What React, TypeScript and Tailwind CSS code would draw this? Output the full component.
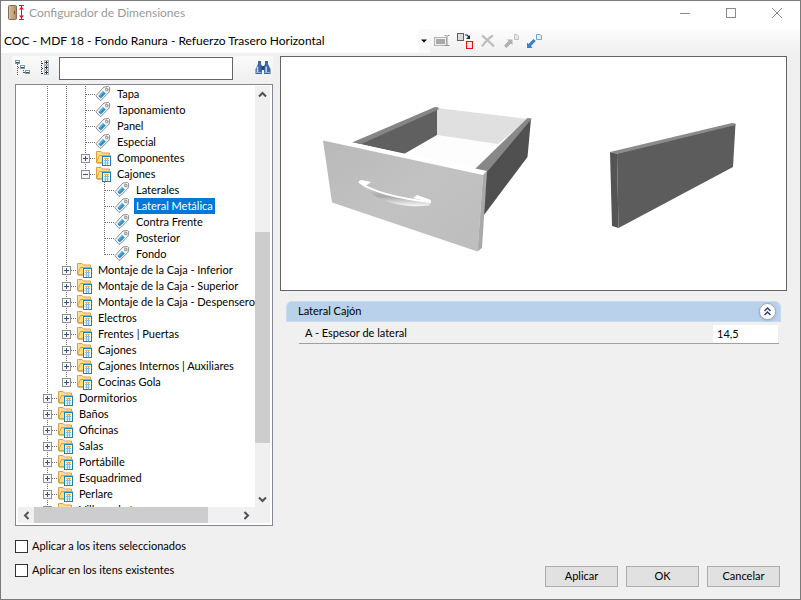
import { useState } from 'react'
import { clsx } from 'clsx'

type Cell = 'line' | 'blank' | 'tee' | 'end' | 'plus' | 'plusEnd' | 'minusEnd'

interface TreeRow {
  name: string
  cells: Cell[]
  leaf?: boolean
}

const rows: TreeRow[] = [
  { name: 'Tapa', cells: ['line', 'line', 'tee'], leaf: true },
  { name: 'Taponamiento', cells: ['line', 'line', 'tee'], leaf: true },
  { name: 'Panel', cells: ['line', 'line', 'tee'], leaf: true },
  { name: 'Especial', cells: ['line', 'line', 'tee'], leaf: true },
  { name: 'Componentes', cells: ['line', 'line', 'plus'] },
  { name: 'Cajones', cells: ['line', 'line', 'minusEnd'] },
  { name: 'Laterales', cells: ['line', 'line', 'blank', 'tee'], leaf: true },
  { name: 'Lateral Metálica', cells: ['line', 'line', 'blank', 'tee'], leaf: true },
  { name: 'Contra Frente', cells: ['line', 'line', 'blank', 'tee'], leaf: true },
  { name: 'Posterior', cells: ['line', 'line', 'blank', 'tee'], leaf: true },
  { name: 'Fondo', cells: ['line', 'line', 'blank', 'end'], leaf: true },
  { name: 'Montaje de la Caja - Inferior', cells: ['line', 'plus'] },
  { name: 'Montaje de la Caja - Superior', cells: ['line', 'plus'] },
  { name: 'Montaje de la Caja - Despensero', cells: ['line', 'plus'] },
  { name: 'Electros', cells: ['line', 'plus'] },
  { name: 'Frentes | Puertas', cells: ['line', 'plus'] },
  { name: 'Cajones', cells: ['line', 'plus'] },
  { name: 'Cajones Internos | Auxiliares', cells: ['line', 'plus'] },
  { name: 'Cocinas Gola', cells: ['line', 'plusEnd'] },
  { name: 'Dormitorios', cells: ['plus'] },
  { name: 'Baños', cells: ['plus'] },
  { name: 'Oficinas', cells: ['plus'] },
  { name: 'Salas', cells: ['plus'] },
  { name: 'Portábille', cells: ['plus'] },
  { name: 'Esquadrimed', cells: ['plus'] },
  { name: 'Perlare', cells: ['plus'] },
  { name: 'Villamarket', cells: ['plus'] },
]

function Guide({ cell }: { cell: Cell }) {
  const vertical = cell !== 'blank'
  const short = cell === 'end' || cell === 'plusEnd' || cell === 'minusEnd'
  const horizontal = cell !== 'blank' && cell !== 'line'
  const box = cell === 'plus' || cell === 'plusEnd' || cell === 'minusEnd'
  return (
    <svg width="19" height="16" viewBox="0 0 19 16" className="shrink-0" shapeRendering="crispEdges">
      {vertical && <path d={short ? 'M9.5 0V9' : 'M9.5 0V16'} stroke="#6e6e6e" strokeDasharray="1 1" />}
      {horizontal && <path d="M10 8.5H19" stroke="#6e6e6e" strokeDasharray="1 1" />}
      {box && (
        <>
          <rect x="5.5" y="4.5" width="8" height="8" fill="#f6f6f6" stroke="#8f8f8f" />
          <path d="M7 8.5H12" stroke="#3b4f94" />
          {cell !== 'minusEnd' && <path d="M9.5 6V11" stroke="#3b4f94" />}
        </>
      )}
    </svg>
  )
}

function FolderIcon() {
  return (
    <svg width="18" height="16" viewBox="0 0 18 16" className="shrink-0">
      <path d="M1.5 12.5V1.5H6L7.5 3H14.5V12.5Z" fill="#fbe08f" stroke="#d9a045" />
      <path d="M1.500 12.500L4.500 5.500H15.500V12.500Z" fill="#fddf80" stroke="#d9a045" />
      <path d="M2 13.500H7" stroke="#c9c0b0" />
      <rect x="7.500" y="6.500" width="8" height="9" fill="#fff" stroke="#1d7fb8" />
      <path d="M9 8.500H14" stroke="#f0b050" />
      <path d="M9 10.500H14M9 13H14M10.500 9V15M12.500 9V15" stroke="#86b9e2" />
    </svg>
  )
}

function TagIcon() {
  return (
    <svg width="18" height="16" viewBox="0 0 18 16" className="shrink-0">
      <path d="M0.800 9.800L9 1L13.500 0.500L14.800 1.800L14.200 6L6 14.300L5 14.300Z" fill="#f7f7f7" stroke="#8e8e8e" />
      <path d="M3.300 10L8 5L10.800 7.400L5.800 12.400Z" fill="#2b8fd0" />
      <path d="M4.800 9.800L8.300 6" stroke="#7cc8f0" />
      <circle cx="11.800" cy="3.500" r="1.300" fill="#ddd" stroke="#888" />
    </svg>
  )
}

function Chevron({ d }: { d: string }) {
  return (
    <svg width="9" height="9" viewBox="0 0 9 9" fill="none" stroke="#505050" strokeWidth="2">
      <path d={d} />
    </svg>
  )
}

function Tree() {
  const [selected, setSelected] = useState(7)
  return (
    <div className="ml-[3px] mt-1 flex min-h-0 flex-1 flex-col border border-[#828790] bg-white px-0.5 pb-0.5 pt-px">
      <div className="flex min-h-0 flex-1">
        <ul className="min-w-0 flex-1 overflow-hidden pl-5">
          {rows.map((row, i) => (
            <li key={i} className="flex h-4 items-center">
              {row.cells.map((cell, c) => (
                <Guide key={c} cell={cell} />
              ))}
              {row.leaf ? <TagIcon /> : <FolderIcon />}
              <button
                onClick={() => setSelected(i)}
                className={clsx(
                  'ml-0.5 h-4 whitespace-nowrap px-0.5 leading-4',
                  selected === i && 'bg-[#0078d7] text-white'
                )}
              >
                {row.name}
              </button>
            </li>
          ))}
        </ul>
        <div className="flex w-[15px] flex-col bg-[#f0f0f0]">
          <button aria-label="Subir" className="flex h-4 items-center justify-center">
            <Chevron d="M1 6.500L4.500 3L8 6.500" />
          </button>
          <div className="flex flex-1 flex-col">
            <div className="grow-[130]" />
            <div className="grow-[210] bg-[#cdcdcd]" />
            <div className="grow-[48]" />
          </div>
          <button aria-label="Bajar" className="flex h-4 items-center justify-center">
            <Chevron d="M1 2.500L4.500 6L8 2.500" />
          </button>
        </div>
      </div>
      <div className="flex h-4 bg-[#f0f0f0] pr-4">
        <button aria-label="Izquierda" className="flex w-4 items-center justify-center">
          <Chevron d="M6.500 1L3 4.500L6.500 8" />
        </button>
        <div className="flex flex-1">
          <div className="grow-[175] bg-[#cdcdcd]" />
          <div className="grow-[30]" />
        </div>
        <button aria-label="Derecha" className="flex w-4 items-center justify-center">
          <Chevron d="M2.500 1L6 4.500L2.500 8" />
        </button>
      </div>
    </div>
  )
}

function TitleBar() {
  return (
    <header className="flex h-7 shrink-0 items-center bg-white pl-1.5 pr-[17px]">
      <svg width="18" height="18" viewBox="0 0 18 18" className="-mt-1 mr-1">
        <defs>
          <linearGradient id="door" x1="0" x2="1">
            <stop offset="0" stopColor="#ddc3a0" />
            <stop offset="1" stopColor="#b08a5e" />
          </linearGradient>
        </defs>
        <rect x="1.500" y="1.500" width="8" height="14" rx="1" fill="url(#door)" stroke="#8a6f50" />
        <path d="M7.500 7V10" stroke="#6e5233" />
        <path d="M12 1.500H17M12 15.500H17M14.500 2V15" stroke="#e0102a" />
        <path d="M12 5.500L14.500 2.500L17 5.500ZM12 11.500L14.500 14.500L17 11.500Z" fill="#e0102a" />
      </svg>
      <h1 className="-mt-1 flex-1 text-[12px] text-[#999]">Configurador de Dimensiones</h1>
      <div className="-mt-1 flex gap-[34px] text-[#8a8a8a]">
        <button aria-label="Minimizar">
          <svg width="12" height="12" viewBox="0 0 12 12" stroke="currentColor">
            <path d="M1 6.500H11" />
          </svg>
        </button>
        <button aria-label="Maximizar">
          <svg width="12" height="12" viewBox="0 0 12 12" fill="none" stroke="currentColor">
            <rect x="1.500" y="1.500" width="9" height="9" />
          </svg>
        </button>
        <button aria-label="Cerrar">
          <svg width="12" height="12" viewBox="0 0 12 12" stroke="currentColor">
            <path d="M1 1L11 11M11 1L1 11" />
          </svg>
        </button>
      </div>
    </header>
  )
}

function Toolbar() {
  return (
    <div className="flex h-6 shrink-0 items-center bg-linear-to-b from-[#fcfcfc] to-[#f0f0f0]">
      <div className="relative h-full w-[429px]">
        <select
          aria-label="Configuración"
          className="h-full w-full appearance-none bg-white pl-[3px] text-[12px] text-black"
        >
          <option>COC - MDF 18 - Fondo Ranura - Refuerzo Trasero Horizontal</option>
        </select>
        <div className="pointer-events-none absolute inset-y-0 right-0 flex w-3 items-center justify-center bg-[#fafafa]">
          <svg width="6" height="4" viewBox="0 0 6 4">
            <path d="M0 0.500H6L3 3.500Z" fill="#000" />
          </svg>
        </div>
      </div>
      <div className="ml-1 flex gap-[7px]">
        <button aria-label="Renombrar">
          <svg width="16" height="16" viewBox="0 0 16 16" fill="none">
            <rect x="0.500" y="4.500" width="12" height="8" fill="#eee" stroke="#b5b5b5" />
            <rect x="2" y="6" width="9" height="5" fill="#a8a8a8" />
            <path d="M10.500 2.500H12.500M13.500 2.500H15.500M13 3V12M10.500 12.500H15.500" stroke="#949494" />
          </svg>
        </button>
        <button aria-label="Reemplazar">
          <svg width="16" height="16" viewBox="0 0 16 16" fill="none">
            <rect x="0.500" y="0.500" width="6" height="7" fill="#dcdcdc" stroke="#6a5a60" />
            <rect x="9.500" y="8.500" width="6" height="7" fill="#f2e4e4" stroke="#e81010" />
            <path d="M8 2H10L12 4" stroke="#14286e" strokeWidth="1.200" />
            <path d="M13 2V6H9Z" fill="#14286e" />
          </svg>
        </button>
        <button aria-label="Eliminar">
          <svg width="16" height="16" viewBox="0 0 16 16" fill="none" stroke="#bdbdbd" strokeWidth="2.200">
            <path d="M2 2.500C5 5 10 9 14 13.500M13 2.500C9 5 5 9 2 13.500" />
          </svg>
        </button>
        <button aria-label="Exportar">
          <svg width="16" height="16" viewBox="0 0 16 16">
            <path d="M1 12.500L5.500 8L4 6.500H9.500V12L8 10.500L3.500 15Z" fill="#b0b0b0" />
            <path d="M11.500 1.500H14L15.500 3V6.500H11.500Z" fill="#e8e8e8" stroke="#c0c0c0" />
          </svg>
        </button>
        <button aria-label="Importar">
          <svg width="16" height="16" viewBox="0 0 16 16">
            <path d="M1 15V9.500L2.500 11L7.500 6L9.800 8L5 13L6.500 15Z" fill="#3d7dca" />
            <path d="M10.500 1.500H14L15.500 3V6.500H10.500Z" fill="#e6f0fb" stroke="#6fa3e0" />
          </svg>
        </button>
      </div>
    </div>
  )
}

function SearchBar() {
  return (
    <div className="flex h-6 shrink-0 items-center bg-linear-to-b from-[#fafafa] to-[#f0f0f0] pl-[3px] pr-0.5">
      <button aria-label="Contraer todo">
        <svg width="16" height="16" viewBox="0 0 16 16" fill="none" shapeRendering="crispEdges">
          <path d="M2.500 0V16M3 7.500H6M8.500 10V13M9 12.500H11" stroke="#555" strokeDasharray="1 1" />
          <rect x="0.500" y="0.500" width="4" height="3" fill="#fff" stroke="#8299a8" />
          <rect x="5.500" y="5.500" width="4" height="3" fill="#fff" stroke="#8299a8" />
          <rect x="10.500" y="10.500" width="4" height="3" fill="#fff" stroke="#8299a8" />
          <path d="M1 2H4M6 7H9M11 12H14" stroke="#33566c" />
        </svg>
      </button>
      <button aria-label="Expandir todo" className="ml-2">
        <svg width="16" height="16" viewBox="0 0 16 16" fill="none" shapeRendering="crispEdges">
          <path d="M2.500 1V15M3 3.500H6M3 8.500H6M3 13.500H6" stroke="#333" strokeDasharray="1 1" />
          <g fill="#fff" stroke="#a5b1ba">
            <rect x="5.500" y="0.500" width="4" height="4" />
            <rect x="5.500" y="5.500" width="4" height="4" />
            <rect x="5.500" y="10.500" width="4" height="4" />
          </g>
          <path d="M6 2.500H9M7.500 1V4M6 7.500H9M7.500 6V9M6 12.500H9M7.500 11V14" stroke="#333" />
        </svg>
      </button>
      <input aria-label="Buscar" className="ml-1 h-[23px] min-w-0 flex-1 border border-[#646464] bg-white px-1 outline-none" />
      <button aria-label="Buscar elemento" className="ml-[22px]">
        <svg width="16" height="16" viewBox="0 0 16 16">
          <path d="M3 1H6V4L7 6V14H0.500V9L3 4Z" fill="#3f66a8" />
          <path d="M10 1H13V4L15.500 9V14H9V6L10 4Z" fill="#3f66a8" />
          <path d="M6.500 6H9.500V10H6.500Z" fill="#24427c" />
          <path d="M2.500 6.500V12M11.200 6.500V12" stroke="#c3d8f2" strokeWidth="1.500" />
          <path d="M1 12.500H6.500M9.500 12.500H15" stroke="#8fb1de" />
        </svg>
      </button>
    </div>
  )
}

function Preview() {
  return (
    <div className="h-[235px] shrink-0 border border-[#646464] bg-white">
      <svg viewBox="281 57 505 233" className="h-full w-full">
        <defs>
          <linearGradient id="front" x1="0" y1="0" x2="1" y2="1">
            <stop offset="0" stopColor="#b9b9b9" />
            <stop offset="0.500" stopColor="#c2c2c2" />
            <stop offset="1" stopColor="#bdbdbd" />
          </linearGradient>
          <linearGradient id="grip" x1="0" y1="0" x2="0" y2="1">
            <stop offset="0" stopColor="#e8e8e8" />
            <stop offset="0.600" stopColor="#a8a8a8" />
            <stop offset="1" stopColor="#f8f8f8" />
          </linearGradient>
        </defs>
        {/* drawer box */}
        <path d="M437 134L500 144L478 170L404 154Z" fill="#fdfdfd" />
        <path d="M437 108L528 119L498 144L437 135Z" fill="#e0e0e0" />
        <path d="M356 143L437 108V135L404 154Z" fill="#606060" />
        <path d="M352 142.500L435 107L438.500 107.500V109.500L361 144Z" fill="#858585" />
        <path d="M484 169L531 119L527.500 157L484 215Z" fill="#505050" />
        <path d="M475 169L527.500 118L532 118.500L487 172Z" fill="#888" />
        {/* drawer front */}
        <path d="M323 140L352 142.500L487 171L483 176Z" fill="#fff" />
        <path d="M323 140.500L483 175L477.500 251.500L332 202.500Z" fill="url(#front)" />
        <path d="M483 175L487 171L482 248L477.500 251.500Z" fill="#a9a9a9" />
        {/* handle */}
        <path d="M359 182C374 193 403 199 431.500 202L429 205.500C408 208 378 205 359 182Z" fill="url(#grip)" />
        <path d="M359 182C374 193 403 199 431 202" fill="none" stroke="#fff" strokeWidth="2" />
        <path d="M358.500 181L362 180L371 182L367 185L364 186ZM413 198L417 195L431 200L430 202Z" fill="#fff" />
        {/* side panel */}
        <path d="M617 153.500L735.500 124L733 167L618.500 228Z" fill="#5c5c5c" />
        <path d="M610 152L617 153.500L618.500 228L612 226Z" fill="#545454" />
        <path d="M610 152L732 123L735.500 123.500V125L617 154Z" fill="#8b8b8b" />
      </svg>
    </div>
  )
}

export default function App() {
  const [thickness, setThickness] = useState('14,5')
  const [open, setOpen] = useState(true)

  return (
    <div className="flex h-screen min-h-[500px] flex-col border border-[#7a7a7a] bg-[#f0f0f0] font-['Lato',sans-serif] text-[11px] text-black">
      <TitleBar />
      <Toolbar />
      <main className="flex min-h-0 flex-1 pt-[3px]">
        <section className="ml-[11px] flex w-[263px] flex-col pr-[2px]">
          <SearchBar />
          <Tree />
          <div className="ml-[3px] flex flex-col gap-2 pb-[21px] pt-3">
            <label className="flex h-4 items-center gap-1">
              <input type="checkbox" className="size-[13px] appearance-none border border-[#333] bg-white checked:bg-[#0078d7]" />
              Aplicar a los itens seleccionados
            </label>
            <label className="flex h-4 items-center gap-1">
              <input type="checkbox" className="size-[13px] appearance-none border border-[#333] bg-white checked:bg-[#0078d7]" />
              Aplicar en los itens existentes
            </label>
          </div>
        </section>
        <section className="ml-[5px] mr-[13px] flex min-w-0 flex-1 flex-col">
          <Preview />
          <div className="ml-1.5 mr-[6px] mt-[10px]">
            <div className="flex h-[21px] items-center rounded-t-md border border-[#c8dcf0] bg-[#b9d1ea] pl-[11px] pr-1">
              <h2 className="flex-1">Lateral Cajón</h2>
              <button
                aria-label="Contraer"
                onClick={() => setOpen(!open)}
                className="flex size-[17px] items-center justify-center rounded-full border border-[#a0a8b8] bg-white shadow-sm"
              >
                <svg width="9" height="9" viewBox="0 0 9 9" fill="none" stroke="#26386e" strokeWidth="1.400">
                  <path d="M1.500 4L4.500 1L7.500 4M1.500 8L4.500 5L7.500 8" />
                </svg>
              </button>
            </div>
            {open && (
              <div className="ml-[13px] mr-0.5 flex h-[22px] items-center border-b border-[#a0a0a0] pl-1.5 pr-px pt-0.5">
                <label htmlFor="thickness" className="flex-1">
                  A - Espesor de lateral
                </label>
                <input
                  id="thickness"
                  value={thickness}
                  onChange={e => setThickness(e.target.value)}
                  className="h-[18px] w-[65px] bg-white px-1 outline-none"
                />
              </div>
            )}
          </div>
          <div className="mb-3 mr-[7px] mt-auto flex justify-end gap-2">
            {['Aplicar', 'OK', 'Cancelar'].map(name => (
              <button key={name} className="h-[21px] w-[73px] border border-[#adadad] bg-[#e1e1e1]">
                {name}
              </button>
            ))}
          </div>
        </section>
      </main>
    </div>
  )
}
